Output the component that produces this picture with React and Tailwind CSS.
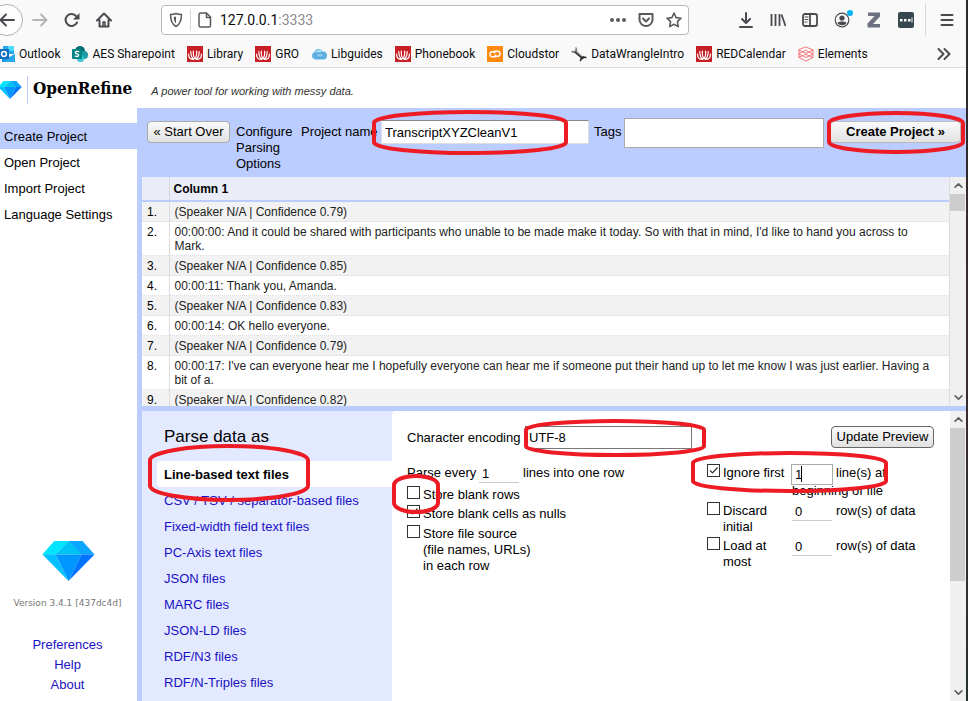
import React from "react";

/* Hand-drawn highlight ring: straight sides with shallow elliptical caps. */
function Ring({ w, h, className }) {
  const s = 2;
  const r = h * 0.28;
  const rx = w / 2 - s;
  const ry = r - s;
  const d = `M${s} ${r}A${rx} ${ry} 0 0 1 ${w - s} ${r}V${h - r}A${rx} ${ry} 0 0 1 ${s} ${h - r}Z`;
  return (
    <svg aria-hidden="true" width={w} height={h} className={`pointer-events-none absolute z-10 ${className}`}>
      <path d={d} fill="none" stroke="#ed1c24" strokeWidth="4" />
    </svg>
  );
}

function Icon({ size = 16, children, ...rest }) {
  return (
    <svg aria-hidden="true" width={size} height={size} viewBox="0 0 16 16" fill="none" stroke="#4a4a4f" strokeWidth="2" strokeLinecap="round" strokeLinejoin="round" className="block shrink-0" {...rest}>
      {children}
    </svg>
  );
}

function Diamond({ className }) {
  return (
    <svg aria-hidden="true" viewBox="0 0 52 40" className={className}>
      <path d="M0 13.500 12 0 14.500 13.500Z" fill="#00f0ff" />
      <path d="M12 0 26 0 13 13.500H0Z" fill="#00e5ff" />
      <path d="M26 0H40L52 13.500H38Z" fill="#0aa5ff" />
      <path d="M26 0 39 13.500H13Z" fill="#00c3f5" />
      <path d="M0 13.500H13L26 40Z" fill="#00c0ff" />
      <path d="M13 13.500H39L26 40Z" fill="#0096ff" />
      <path d="M39 13.500H52L26 40Z" fill="#0073ff" />
    </svg>
  );
}

function Lotus() {
  return (
    <Icon stroke="none">
      <rect width="16" height="16" fill="#c62026" />
      <path d="M1.500 8c0 4 2 5.500 5 5.500M3.800 5.500c0 4 .7 6.500 3.200 7.500M6.300 5c-.3 3 0 5.500 1.400 7.500M9.700 5c.3 3 0 5.500-1.400 7.500M12.200 5.500c0 4-.7 6.500-3.200 7.500M14.500 8c0 4-2 5.500-5 5.500" stroke="#fff" strokeWidth="1.200" fill="none" />
    </Icon>
  );
}

function OutlookIcon() {
  return (
    <Icon stroke="none">
      <rect x="4" y="0" width="11" height="8" fill="#28a8ea" />
      <rect x="9" y="0" width="6" height="5" fill="#50d9ff" />
      <rect x="4" y="4" width="6" height="6" fill="#0364b8" />
      <path d="M3 8l6 4 7-4v8H3z" fill="#1490df" />
      <path d="M3 16L16 8v8z" fill="#28a8ea" />
      <rect x="0" y="3" width="10" height="10" fill="#0f6cbd" />
      <circle cx="5" cy="8" r="2.400" stroke="#fff" strokeWidth="1.500" fill="none" />
    </Icon>
  );
}

function SharepointIcon() {
  return (
    <Icon stroke="none">
      <circle cx="8" cy="5" r="5" fill="#036c70" />
      <circle cx="12" cy="9" r="4" fill="#1a9ba1" />
      <circle cx="8.500" cy="12.500" r="3.500" fill="#37c6d0" />
      <rect x="0" y="3" width="10" height="10" rx="1" fill="#038387" />
      <path d="M6.800 5.800C5 4.800 3.200 5.500 3.400 6.700c.2 1.300 3.300 1 3.300 2.600 0 1.300-2 1.500-3.500.7" stroke="#fff" strokeWidth="1.300" fill="none" />
    </Icon>
  );
}

function CloudIcon() {
  return (
    <Icon stroke="none">
      <path d="M4 13.500a3.800 3.800 0 0 1-.8-7.200A4.800 4.800 0 0 1 12 5.500a4 4 0 0 1 0 8z" fill="#5fb0e0" />
      <path d="M4 6.500a4 4 0 0 1 7.500-.5z" fill="#a9daf5" />
      <path d="M6 7.500h6v3.500H6z" fill="#8fcaf0" stroke="#4f9fd4" strokeWidth=".7" />
    </Icon>
  );
}

function CloudstorIcon() {
  return (
    <Icon stroke="none">
      <rect width="16" height="16" fill="#ff8a0f" />
      <path d="M8.500 10.800H5.500a2.500 2.500 0 0 1-1.500-4.600c1.200-.8 2.800-.3 3.800.6M7.500 5.200h3a2.500 2.500 0 0 1 1.500 4.600c-1.200.8-2.800.3-3.800-.6" stroke="#fff" strokeWidth="1.500" fill="none" />
    </Icon>
  );
}

function WrenchIcon() {
  return (
    <Icon stroke="none">
      <path d="M4 5l8 7" stroke="#a8a8a8" strokeWidth="2.500" />
      <path d="M1 5.500l2.500 1 2-1.500-.5-3" stroke="#777" strokeWidth="1.500" fill="none" />
      <path d="M4.500 6.500l7 6" stroke="#222" strokeWidth="1.600" />
      <path d="M9.500 14.500l1-2.500 1.800-1 2.500.5" stroke="#222" strokeWidth="1.600" fill="none" />
    </Icon>
  );
}

function ElementsIcon() {
  return (
    <Icon strokeWidth="1" stroke="#f4777c">
      <path d="M8 1l7 3-7 3.500L1 4zM8 4.500l7 3.500-7 3.500L1 8zM8 8.500l7 3-7 3.500-7-3.500zM1 4v7.500M15 4v7.500" />
    </Icon>
  );
}

const bookmarks = [
  ["Outlook", OutlookIcon],
  ["AES Sharepoint", SharepointIcon],
  ["Library", Lotus],
  ["GRO", Lotus],
  ["Libguides", CloudIcon],
  ["Phonebook", Lotus],
  ["Cloudstor", CloudstorIcon],
  ["DataWrangleIntro", WrenchIcon],
  ["REDCalendar", Lotus],
  ["Elements", ElementsIcon],
];

function BrowserBar() {
  return (
    <header className="border-b border-[#dcdcdc] bg-[#f9f9fa] font-['Roboto','Open_Sans',sans-serif]">
      <div className="flex h-[39px] items-center pr-[11px]">
        <button aria-label="Back" className="-ml-[9px] grid size-8 place-items-center rounded-full border border-[#b1b1b3] bg-[#fdfdfd]">
          <Icon><path d="M15 8H2M7 2.500 1.500 8 7 13.500" /></Icon>
        </button>
        <button aria-label="Forward" className="ml-[9px]">
          <Icon stroke="#b5b5b7"><path d="M1 8h13M9 2.500 14.500 8 9 13.500" /></Icon>
        </button>
        <button aria-label="Reload" className="ml-4">
          <Icon><path d="M13 10.500A6 6 0 1 1 12.500 4.500" /><path d="M15.500 1v6.500H9z" fill="#4a4a4f" stroke="none" /></Icon>
        </button>
        <button aria-label="Home" className="ml-4">
          <Icon><path d="M1 8.500 8 1.500l7 7M3.500 8v6.500h9V8" /><path d="M7 14v-4h2v4" strokeWidth="1.500" /></Icon>
        </button>
        <div className="mr-[49px] ml-[49px] flex h-[30px] flex-1 items-center rounded-sm border border-[#b9b9bb] bg-white pr-[6px] pl-[6px]">
          <Icon stroke="#5a5a5e" strokeWidth="1.500"><path d="M8 1.500c2 1 3.500 1 5.500 1 0 6-1 9.500-5.500 12C3.500 12 2.500 8.500 2.500 2.500c2 0 3.500 0 5.500-1z" /><path d="M8 4.500v7c-1.500-1.500-2.300-3.500-2.300-6.500z" fill="#5a5a5e" stroke="none" /></Icon>
          <span className="mx-[6px] h-[22px] w-px bg-[#d7d7db]" />
          <Icon stroke="#5a5a5e" strokeWidth="1.500"><path d="M3.500 1h6l4 4v8.500a1.500 1.500 0 0 1-1.500 1.500H3.500A1.500 1.500 0 0 1 2 13.500v-11A1.500 1.500 0 0 1 3.500 1zM9.500 1v4.500h4" /></Icon>
          <p className="ml-[7px] flex-1 text-sm leading-5 text-[#0c0c0d]">127.0.0.1<span className="text-[#8a8a8f]">:3333</span></p>
          <div className="flex items-center gap-3">
            <Icon stroke="none" fill="#5a5a5e"><circle cx="2" cy="8" r="2" /><circle cx="8" cy="8" r="2" /><circle cx="14" cy="8" r="2" /></Icon>
            <Icon stroke="#5a5a5e"><path d="M1.500 2h13v5.500a6.500 6.500 0 0 1-13 0zM5 6.500l3 3 3-3" /></Icon>
            <Icon stroke="#5a5a5e" strokeWidth="1.600"><path d="M8 1l2.100 4.600 4.900.6-3.600 3.400.9 5L8 12.200 3.700 14.600l.9-5L1 6.200l4.900-.6z" /></Icon>
          </div>
        </div>
        <div className="flex items-center gap-4">
          <Icon><path d="M8 1v9.500M4 7l4 4 4-4M2 15h12" /></Icon>
          <Icon strokeLinecap="butt"><path d="M1.500 2v12M5.500 2v12M9.500 2v12M11.500 2.500 15.500 14" strokeWidth="1.800" /></Icon>
          <Icon strokeWidth="1.800"><rect x="1" y="2" width="14" height="12" rx="2" /><path d="M8 2v12" /><path d="M3 5h3M3 7.500h3M3 10h2" strokeWidth="1" /></Icon>
          <span className="relative">
            <Icon strokeWidth="1.200"><circle cx="8" cy="8" r="6.800" /><circle cx="8" cy="6" r="2.600" fill="#4a4a4f" stroke="none" /><path d="M3.500 11c1-2 8-2 9 0-1.500 3-7.500 3-9 0z" fill="#4a4a4f" stroke="none" /></Icon>
            <i className="absolute -top-[2px] -right-[3px] size-[6px] rounded-full bg-[#00b3f4]" />
          </span>
          <Icon stroke="none" fill="#6d7280"><path d="M2 0.500h12v4L7 12h7v3.500H1.500v-4L8.500 4H2z" /></Icon>
          <Icon stroke="none"><rect width="16" height="16" rx="2" fill="#37474f" /><path d="M2 7h2.500v2.500H2zM6 7h2.500v2.500H6zM10 7h2.500v2.500H10zM13.500 5.500h1v5h-1z" fill="#fff" /></Icon>
        </div>
        <span className="ml-[11px] h-[33px] w-px bg-[#d7d7db]" />
        <button aria-label="Menu" className="ml-[13px]">
          <Icon><path d="M2.500 3h11M2.500 8h11M2.500 13h11" /></Icon>
        </button>
      </div>
      <nav aria-label="Bookmarks" className="flex h-7 items-center gap-3 pt-px pr-[14px] text-xs text-[#0c0c0d]">
        {bookmarks.map(([name, Glyph]) => (
          <a key={name} href="#" className="flex items-center gap-1 whitespace-nowrap first:-ml-px"><Glyph />{name}</a>
        ))}
        <button aria-label="More bookmarks" className="ml-auto">
          <Icon><path d="M2.500 3 7.500 8l-5 5M8.500 3l5 5-5 5" /></Icon>
        </button>
      </nav>
    </header>
  );
}

function Scrollbar({ thumb }) {
  return (
    <div aria-hidden="true" className="flex w-[16px] shrink-0 flex-col items-center bg-[#f0f0f0]">
      <div className="grid h-[17px] place-items-center"><Icon size={9} strokeWidth="3" stroke="#606060"><path d="M2 11l6-6 6 6" /></Icon></div>
      <div className={`w-[15px] self-start bg-[#cdcdcd] ${thumb}`} />
      <div className="mt-auto grid h-[17px] place-items-center"><Icon size={9} strokeWidth="3" stroke="#606060"><path d="M2 5l6 6 6-6" /></Icon></div>
    </div>
  );
}

const rows = [
  "(Speaker N/A | Confidence 0.79)",
  "00:00:00: And it could be shared with participants who unable to be made make it today. So with that in mind, I'd like to hand you across to Mark.",
  "(Speaker N/A | Confidence 0.85)",
  "00:00:11: Thank you, Amanda.",
  "(Speaker N/A | Confidence 0.83)",
  "00:00:14: OK hello everyone.",
  "(Speaker N/A | Confidence 0.79)",
  "00:00:17: I've can everyone hear me I hopefully everyone can hear me if someone put their hand up to let me know I was just earlier. Having a bit of a.",
  "(Speaker N/A | Confidence 0.82)",
];

const formats = [
  "CSV / TSV / separator-based files",
  "Fixed-width field text files",
  "PC-Axis text files",
  "JSON files",
  "MARC files",
  "JSON-LD files",
  "RDF/N3 files",
  "RDF/N-Triples files",
];

function Check({ id, checked }) {
  return (
    <span className="relative block size-[13px]">
      <input id={id} type="checkbox" defaultChecked={checked} className="peer block size-[13px] appearance-none border border-[#333] bg-white" />
      <svg aria-hidden="true" viewBox="0 0 13 13" className="pointer-events-none absolute inset-0 hidden size-[13px] peer-checked:block">
        <path d="M3 6.500 5.500 9 10.500 3.500" fill="none" stroke="#333" strokeWidth="1.200" />
      </svg>
    </span>
  );
}

const lineInput = "h-[19px] w-10 border-b border-[#ccc] bg-transparent px-[3px] outline-none";
const grayButton = "h-[22px] rounded-sm border bg-linear-to-b from-[#fafafa] to-[#e2e2e2] whitespace-nowrap";

function Sidebar() {
  return (
    <aside className="flex w-[137px] shrink-0 flex-col bg-white">
      <nav className="mt-[15px]">
        {["Create Project", "Open Project", "Import Project", "Language Settings"].map((t) => (
          <a key={t} href="#" className="block h-[26px] pl-1 leading-[28px] first:bg-[#bbccff]">{t}</a>
        ))}
      </nav>
      <div className="mt-auto flex flex-col items-center pr-[2px] pb-[6px]">
        <Diamond className="ml-[2px] h-10 w-[53px]" />
        <p className="mt-[14px] font-['DejaVu_Sans',sans-serif] text-[9px] leading-4 whitespace-nowrap text-[#777]">Version 3.4.1 [437dc4d]</p>
        <nav className="mt-6 flex flex-col items-center leading-5 text-[#1a11c4]">
          <a href="#">Preferences</a>
          <a href="#">Help</a>
          <a href="#">About</a>
        </nav>
      </div>
    </aside>
  );
}

function ProjectBar() {
  return (
    <div className="flex h-[69px] shrink-0 items-start pt-[13px] pl-[5px] leading-4">
      <button className={`${grayButton} w-[83px] border-[#aaa]`}>« Start Over</button>
      <p className="ml-[6px] w-[65px] pt-[3px]">Configure Parsing Options</p>
      <label htmlFor="name" className="w-20 pt-[3px] whitespace-nowrap">Project name</label>
      <div className="relative -mt-px flex-1">
        <input id="name" defaultValue="TranscriptXYZCleanV1" className="block h-6 w-full border border-[#ddd] border-t-[#888] bg-white px-[3px] outline-none" />
        <Ring w={196} h={45} className="-top-[10px] -left-[9px]" />
      </div>
      <label htmlFor="tags" className="ml-[5px] w-[30px] pt-[3px]">Tags</label>
      <input id="tags" className="-mt-[3px] h-[30px] w-[200px] border border-[#aaa] bg-white px-1 outline-none" />
      <div className="relative mr-[5px] ml-[6px]">
        <button className={`${grayButton} block w-[131px] border-[#bbb] font-bold`}>Create Project »</button>
        <Ring w={138} h={43} className="-top-[10px] -left-[3px]" />
      </div>
    </div>
  );
}

function Preview() {
  return (
    <div className="flex h-[229px] shrink-0 bg-white">
      <div className="min-w-0 flex-1 overflow-hidden border-r border-[#ddd]">
        <table className="w-full table-fixed border-collapse text-left text-xs leading-[14px]">
          <colgroup><col className="w-[27px]" /><col /></colgroup>
          <thead>
            <tr className="h-6 border-b-2 border-[#bbccff] bg-[#eaecf8]">
              <th className="border-r border-[#d5d5dd]" />
              <th className="pl-1">Column 1</th>
            </tr>
          </thead>
          <tbody className="text-[#222]">
            {rows.map((t, i) => (
              <tr key={i} className="border-b border-dotted border-[#ddd] align-top odd:bg-[#f2f2f2]">
                <td className="border-r border-solid border-r-[#ddd] pt-[3px] pb-[2px] pl-[5px] text-black">{i + 1}.</td>
                <td className="pt-[3px] pr-[10px] pb-[2px] pl-[5px]">{t}</td>
              </tr>
            ))}
          </tbody>
        </table>
      </div>
      <Scrollbar thumb="h-[17px]" />
    </div>
  );
}

function ParserOptions() {
  return (
    <div className="min-w-0 flex-1 rounded-tl bg-white pt-[15px] pl-[15px] leading-4">
      <div className="flex items-start">
        <label htmlFor="enc" className="w-[118px] pt-[4px] whitespace-nowrap">Character encoding</label>
        <div className="relative">
          <input id="enc" defaultValue="UTF-8" className="block h-[23px] w-[167px] border border-[#777] bg-white px-[3px] outline-none" />
          <Ring w={182} h={38} className="-top-[7px] -left-px" />
        </div>
        <button className={`${grayButton} mr-4 ml-auto w-[103px] border-[#666]`}>Update Preview</button>
      </div>

      <div className="mt-[15px] flex justify-between">
        <div>
          <div className="flex h-[22px] items-start">
            <label htmlFor="every" className="w-[72px] pt-px whitespace-nowrap">Parse every</label>
            <input id="every" defaultValue="1" className={lineInput} />
            <span className="ml-1 pt-px whitespace-nowrap">lines into one row</span>
          </div>
          <div className="relative flex h-[19px] gap-[3px]">
            <Check id="rows" />
            <label htmlFor="rows" className="pt-px">Store blank rows</label>
            <Ring w={48} h={40} className="-top-[12px] -left-[15px]" />
          </div>
          <div className="flex h-5 gap-[3px]">
            <Check id="nulls" checked />
            <label htmlFor="nulls" className="pt-px">Store blank cells as nulls</label>
          </div>
          <div className="flex gap-[3px]">
            <Check id="source" />
            <label htmlFor="source" className="pt-px">Store file source<br />(file names, URLs)<br />in each row</label>
          </div>
        </div>

        <div className="relative flex w-[243px] flex-col">
          <div className="flex h-[38px] items-start">
            <Check id="ignore" checked />
            <label htmlFor="ignore" className="ml-[3px] w-[68px] pt-px">Ignore first</label>
            <div className="w-[110px]">
              <div className="flex h-[19px] items-start">
                <span className="relative">
                  <input aria-label="Lines to ignore" defaultValue="1" className="block h-[21px] w-[42px] border border-[#aaa] bg-white px-[3px] outline-none" />
                  <i className="absolute top-[2px] left-[10px] h-4 w-px bg-black" />
                </span>
                <span className="ml-[3px] pt-px whitespace-nowrap">line(s) at</span>
              </div>
              <span className="pl-px whitespace-nowrap">beginning of file</span>
            </div>
          </div>
          <div className="flex h-[35px] items-start">
            <Check id="discard" />
            <label htmlFor="discard" className="ml-[3px] w-[69px] pt-px pr-4">Discard initial</label>
            <input aria-label="Rows to discard" defaultValue="0" className={lineInput} />
            <span className="ml-1 pt-px whitespace-nowrap">row(s) of data</span>
          </div>
          <div className="flex items-start">
            <Check id="load" />
            <label htmlFor="load" className="ml-[3px] w-[69px] pt-px pr-4">Load at most</label>
            <input aria-label="Rows to load" defaultValue="0" className={lineInput} />
            <span className="ml-1 pt-px whitespace-nowrap">row(s) of data</span>
          </div>
          <Ring w={197} h={42} className="-top-[13px] -left-[16px]" />
        </div>
      </div>
    </div>
  );
}

export default function App() {
  return (
    <div className="flex h-screen overflow-hidden bg-white font-['Liberation_Sans',Arial,sans-serif] text-[13px] text-black">
      <div className="flex min-w-0 flex-1 flex-col">
        <BrowserBar />
        <div className="flex h-10 shrink-0 items-center">
          <Diamond className="-ml-[2px] mt-1 h-[18px] w-6" />
          <h1 className="ml-[5px] mt-1 flex h-7 items-center border-l border-[#bbccff] pb-1 pl-[5px] font-['DejaVu_Serif_Condensed','DejaVu_Serif',serif] text-[17px] leading-6 font-bold">OpenRefine</h1>
          <p className="ml-[19px] pt-[6px] text-[11px] text-[#333] italic">A power tool for working with messy data.</p>
        </div>
        <div className="flex min-h-0 flex-1">
          <Sidebar />
          <main className="flex min-w-0 flex-1 flex-col bg-[#bbccff] pl-[5px]">
            <ProjectBar />
            <Preview />
            <div className="mt-[5px] flex min-h-0 flex-1 bg-[#e3e9ff]">
              <section className="w-[250px] shrink-0 overflow-hidden pt-[15px] pl-[15px]">
                <h2 className="pl-[7px] text-[17px] leading-[22px]">Parse data as</h2>
                <ul className="mt-[13px] leading-[28px] text-[#1a11c4]">
                  <li className="relative h-[26px] rounded-l bg-white pl-[7px] font-bold text-black">
                    Line-based text files
                    <Ring w={162} h={58} className="-top-[17px] -left-[9px]" />
                  </li>
                  {formats.map((t) => (
                    <li key={t} className="h-[26px] pl-[7px]"><a href="#">{t}</a></li>
                  ))}
                </ul>
              </section>
              <ParserOptions />
              <Scrollbar thumb="h-[153px]" />
            </div>
          </main>
        </div>
      </div>
      <div aria-hidden="true" className="w-[2px] shrink-0 bg-linear-to-b from-[#2a2a2c] via-[#3a2c2e] to-[#28322c]" />
    </div>
  );
}
